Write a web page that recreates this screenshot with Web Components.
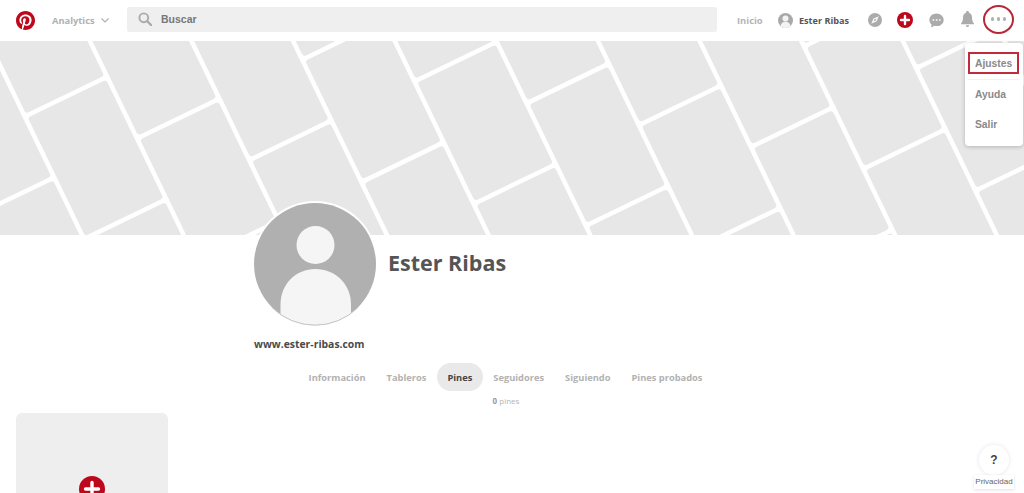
<!DOCTYPE html>
<html lang="es">
<head>
<meta charset="utf-8">
<title>Ester Ribas</title>
<style>
  html, body { margin: 0; height: 493px; overflow: hidden; background: #fff; }
  body { font-family: "Open Sans", "Liberation Sans", sans-serif; }
</style>
</head>
<body>
<pin-page>
  <pin-header slot="header"></pin-header>
  <pin-cover slot="cover"></pin-cover>
  <pin-profile slot="profile" name="Ester Ribas" url="www.ester-ribas.com"></pin-profile>
  <pin-tabs slot="tabs" count="0">
    <pin-tab>Información</pin-tab>
    <pin-tab>Tableros</pin-tab>
    <pin-tab active>Pines</pin-tab>
    <pin-tab>Seguidores</pin-tab>
    <pin-tab>Siguiendo</pin-tab>
    <pin-tab>Pines probados</pin-tab>
  </pin-tabs>
  <pin-add-card slot="grid"></pin-add-card>
  <pin-menu slot="overlay">
    <pin-menu-item marked>Ajustes</pin-menu-item>
    <pin-menu-item divided>Ayuda</pin-menu-item>
    <pin-menu-item>Salir</pin-menu-item>
  </pin-menu>
  <pin-help slot="overlay"></pin-help>
</pin-page>

<script>
const SVG_NS = "http://www.w3.org/2000/svg";

const PLUS_ICON = `
  <svg viewBox="0 0 26 26" width="100%" height="100%" aria-hidden="true">
    <circle cx="13" cy="13" r="13" fill="#bd081c"/>
    <path d="M13 6.500v13M6.500 13h13" stroke="#fff" stroke-width="3.4" stroke-linecap="round"/>
  </svg>`;

class PinElement extends HTMLElement {
  constructor() {
    super();
    this.attachShadow({ mode: "open" });
    this.shadowRoot.innerHTML = this.constructor.markup(this);
  }
}

class PinPage extends PinElement {
  static markup() {
    return `
      <style>
        :host { display: block; position: relative; width: 1024px; height: 493px; overflow: hidden; background: #fff; }
      </style>
      <slot name="header"></slot>
      <slot name="cover"></slot>
      <slot name="profile"></slot>
      <slot name="tabs"></slot>
      <slot name="grid"></slot>
      <slot name="overlay"></slot>`;
  }
}

class PinHeader extends PinElement {
  static markup() {
    return `
      <style>
        :host { display: flex; align-items: center; height: 41px; background: #fff; box-sizing: border-box; padding: 0 0 1px 16px; }
        .logo { width: 19px; height: 19px; flex: none; }
        .analytics { display: flex; align-items: center; gap: 6px; margin-left: 17px; width: 58px; flex: none; font-weight: 700; font-size: 9.300px; color: #b0b0b0; }
        .search { display: flex; align-items: center; gap: 9px; margin-left: 17px; width: 590px; height: 25px; flex: none; box-sizing: border-box; padding: 0 0 1px 11px; margin-bottom: 2px; border-radius: 2px; background: #efefef; }
        .search span { font: 700 10.500px "Liberation Sans", sans-serif; color: #777; }
        .inicio { margin-left: 20px; width: 41px; flex: none; font-weight: 700; font-size: 9.400px; color: #b4b4b4; }
        .user { display: flex; align-items: center; gap: 6px; width: 90px; flex: none; font-weight: 700; font-size: 9.100px; color: #555; white-space: nowrap; }
        .icon { display: block; flex: none; }
        .bell { margin-bottom: 2px; }
        .more { position: relative; display: flex; align-items: center; justify-content: center; width: 31px; height: 29px; flex: none; margin: 0 0 2px 9px; }
        .more::after { content: ""; position: absolute; inset: 0; box-sizing: border-box; border: 2px solid #b5283a; border-radius: 50%; }
        .dot { width: 3.500px; height: 3.500px; margin: 0 1.200px; border-radius: 50%; background: #b0b0b0; }
      </style>
      <svg class="logo" viewBox="0 0 24 24" aria-label="Pinterest">
        <path fill="#bd081c" d="M12 0C5.373 0 0 5.372 0 12c0 5.084 3.163 9.426 7.627 11.174-.105-.949-.2-2.405.042-3.441.218-.937 1.407-5.965 1.407-5.965s-.359-.719-.359-1.782c0-1.668.967-2.914 2.171-2.914 1.023 0 1.518.769 1.518 1.69 0 1.029-.655 2.568-.994 3.995-.283 1.194.599 2.169 1.777 2.169 2.133 0 3.772-2.249 3.772-5.495 0-2.873-2.064-4.882-5.012-4.882-3.414 0-5.418 2.561-5.418 5.207 0 1.031.397 2.138.893 2.738.098.119.112.224.083.345l-.333 1.36c-.053.22-.174.267-.402.161-1.499-.698-2.436-2.889-2.436-4.649 0-3.785 2.75-7.262 7.929-7.262 4.163 0 7.398 2.967 7.398 6.931 0 4.136-2.607 7.464-6.227 7.464-1.216 0-2.359-.631-2.75-1.378l-.748 2.853c-.271 1.043-1.002 2.35-1.492 3.146C9.57 23.812 10.763 24 12 24c6.627 0 12-5.373 12-12 0-6.628-5.373-12-12-12z"/>
      </svg>
      <div class="analytics">
        <span>Analytics</span>
        <svg class="icon" width="8" height="5" viewBox="0 0 8 5"><path d="M.5.500 4 4 7.500.500" fill="none" stroke="#b0b0b0" stroke-width="1.100"/></svg>
      </div>
      <div class="search">
        <svg class="icon" width="14" height="14" viewBox="0 0 14 14"><circle cx="5.800" cy="5.800" r="4.400" fill="none" stroke="#aaa" stroke-width="1.900"/><path d="M9 9l4 4" stroke="#aaa" stroke-width="2.400" stroke-linecap="round"/></svg>
        <span>Buscar</span>
      </div>
      <span class="inicio">Inicio</span>
      <div class="user">
        <svg class="icon" width="15" height="15" viewBox="0 0 15 15">
          <defs><clipPath id="u"><circle cx="7.500" cy="7.500" r="7.500"/></clipPath></defs>
          <circle cx="7.500" cy="7.500" r="7.500" fill="#a9a9a9"/>
          <g clip-path="url(#u)" fill="#f3f3f3"><circle cx="7.500" cy="5.600" r="3"/><ellipse cx="7.500" cy="13.200" rx="5" ry="4.400"/></g>
        </svg>
        <span>Ester Ribas</span>
      </div>
      <svg class="icon" width="14" height="14" viewBox="0 0 14 14">
        <circle cx="7" cy="7" r="7" fill="#ababab"/>
        <path d="M10.800 3.200 8.600 8.600 3.200 10.800 5.400 5.400z" fill="#f4f4f4"/>
        <circle cx="7" cy="7" r=".9" fill="#ababab"/>
      </svg>
      <svg class="icon" style="margin-left:15px" width="16" height="16" viewBox="0 0 26 26">
        <circle cx="13" cy="13" r="13" fill="#bd081c"/>
        <path d="M13 6.500v13M6.500 13h13" stroke="#fff" stroke-width="3.800" stroke-linecap="round"/>
      </svg>
      <svg class="icon" style="margin-left:16px" width="15" height="15" viewBox="0 0 15 15">
        <path d="M7.600.5C3.500.5.4 3.300.4 6.900c0 1.900.9 3.500 2.200 4.700L2.200 14.600l3.200-1.800c.7.2 1.400.3 2.200.3 4 0 7.100-2.800 7.100-6.200S11.600.5 7.600.5z" fill="#ababab"/>
        <circle cx="4.400" cy="6.900" r="1" fill="#eee"/><circle cx="7.600" cy="6.900" r="1" fill="#eee"/><circle cx="10.800" cy="6.900" r="1" fill="#eee"/>
      </svg>
      <svg class="icon bell" style="margin-left:17px" width="13" height="16" viewBox="0 0 13 16">
        <path d="M6.500 0C5.600 0 5 .7 5 1.500v.3C3 2.400 2 4.200 2 6.400c0 3-.7 4.600-2 6v.8h13v-.8c-1.300-1.400-2-3-2-6C11 4.200 10 2.400 8 1.800v-.3C8 .7 7.400 0 6.500 0z" fill="#ababab"/>
        <path d="M4.800 14.200h3.400C8.100 15.200 7.400 16 6.500 16s-1.600-.8-1.700-1.800z" fill="#ababab"/>
      </svg>
      <div class="more" aria-label="Más">
        <span class="dot"></span><span class="dot"></span><span class="dot"></span>
      </div>`;
  }
}

// banner of tilted half-brick tiles, generated in a rotated frame
class PinCover extends PinElement {
  static markup() {
    return `
      <style>
        :host { display: block; height: 194px; overflow: hidden; background: #fff; }
        svg { display: block; }
        rect { fill: #e7e7e7; }
      </style>
      <svg width="1024" height="194" viewBox="0 0 1024 194"><g id="tiles" transform="translate(66 55.700) rotate(-25.800)"></g></svg>`;
  }

  connectedCallback() {
    const group = this.shadowRoot.getElementById("tiles");
    const colWidth = 91.5;
    const tileLength = 136;
    const gap = 4.5;
    for (let col = -2; col < 14; col++) {
      const shift = col * 68.5;
      for (let row = -8; row < 10; row++) {
        const rect = document.createElementNS(SVG_NS, "rect");
        rect.setAttribute("x", (col - 0.5) * colWidth + gap / 2);
        rect.setAttribute("y", shift + row * tileLength + gap / 2);
        rect.setAttribute("width", colWidth - gap);
        rect.setAttribute("height", tileLength - gap);
        rect.setAttribute("rx", 3);
        group.appendChild(rect);
      }
    }
  }
}

class PinProfile extends PinElement {
  static markup(el) {
    return `
      <style>
        :host { display: block; height: 162px; box-sizing: border-box; padding-left: 252px; margin-top: -34px; position: relative; color: #555; }
        .top { display: flex; align-items: flex-start; }
        .avatar { display: block; width: 126px; height: 126px; flex: none; }
        h1 { margin: 42px 0 0 10px; font-size: 21.500px; line-height: 40px; font-weight: 700; color: #555; }
        .url { margin: 9px 0 0 2px; font-size: 10.400px; line-height: 16px; font-weight: 700; color: #4a4a4a; }
      </style>
      <div class="top">
        <svg class="avatar" viewBox="0 0 126 126" aria-hidden="true">
          <defs><clipPath id="c"><circle cx="63" cy="63" r="61"/></clipPath></defs>
          <circle cx="63" cy="63" r="63" fill="#fff"/>
          <circle cx="63" cy="63" r="61" fill="#b0b0b0"/>
          <g clip-path="url(#c)" fill="#f5f5f5">
            <circle cx="63.500" cy="44" r="19"/>
            <path d="M28.500 130V103.500C28.500 83 44 68 63.500 68S99 83 99 103.500V130z"/>
          </g>
          <path d="M20 106.500a61 61 0 0 0 86 0" fill="none" stroke="#c4c4c4" stroke-width="1"/>
        </svg>
        <h1>${el.getAttribute("name")}</h1>
      </div>
      <div class="url">${el.getAttribute("url")}</div>`;
  }
}

class PinTabs extends PinElement {
  static markup(el) {
    return `
      <style>
        :host { display: block; height: 50px; box-sizing: border-box; padding-right: 13px; }
        .row { display: flex; justify-content: center; height: 28px; }
        .count { margin-top: 4px; padding-left: 1px; text-align: center; font-size: 8px; line-height: 12px; color: #b5b5b5; }
        b { color: #999; }
      </style>
      <div class="row"><slot></slot></div>
      <div class="count"><b>${el.getAttribute("count")}</b> pines</div>`;
  }
}

class PinTab extends PinElement {
  static markup() {
    return `
      <style>
        :host { display: flex; align-items: center; height: 28px; padding: 0 10.500px; border-radius: 14px; font-size: 9.300px; font-weight: 700; color: #b2b2b2; white-space: nowrap; }
        :host([active]) { background: #e9e9e9; color: #444; }
      </style>
      <slot></slot>`;
  }
}

class PinAddCard extends PinElement {
  static markup() {
    return `
      <style>
        :host { display: flex; justify-content: center; width: 152px; height: 200px; box-sizing: border-box; margin-left: 16px; padding-top: 63px; border-radius: 6px; background: #eeeeee; }
        .plus { width: 26px; height: 26px; }
      </style>
      <div class="plus">${PLUS_ICON}</div>`;
  }
}

class PinMenu extends PinElement {
  static markup() {
    return `
      <style>
        :host { display: block; position: absolute; top: 43px; right: 1px; width: 58px; height: 103px; box-sizing: border-box; padding-top: 9px; background: #fff; border-radius: 4px; box-shadow: 0 1px 4px rgba(0,0,0,.22); }
      </style>
      <slot></slot>`;
  }
}

class PinMenuItem extends PinElement {
  static markup() {
    return `
      <style>
        :host { display: flex; align-items: center; box-sizing: border-box; width: 52px; height: 30px; margin-left: 3px; padding-left: 7px; font: 700 10.300px "Liberation Sans", sans-serif; color: #8a8a8a; }
        :host([marked]) { width: 51px; height: 22px; margin-bottom: 5px; padding-left: 5px; border: 2px solid #c22a3c; }
        :host([divided]) { border-top: 1px solid #f1f1f1; }
      </style>
      <slot></slot>`;
  }
}

class PinHelp extends PinElement {
  static markup() {
    return `
      <style>
        :host { display: flex; flex-direction: column; align-items: center; position: absolute; right: 9px; top: 445px; width: 42px; }
        .btn { display: flex; align-items: center; justify-content: center; width: 30px; height: 30px; border-radius: 50%; background: #fff; box-shadow: 0 0 5px rgba(0,0,0,.1); font: 700 12px "Liberation Sans", sans-serif; color: #444; }
        .label { padding: 0 1px; background: #fff; box-shadow: 0 1px 3px rgba(0,0,0,.12); font: 400 8px/14px "Liberation Sans", sans-serif; color: #666; }
      </style>
      <div class="btn">?</div>
      <div class="label">Privacidad</div>`;
  }
}

customElements.define("pin-page", PinPage);
customElements.define("pin-header", PinHeader);
customElements.define("pin-cover", PinCover);
customElements.define("pin-profile", PinProfile);
customElements.define("pin-tabs", PinTabs);
customElements.define("pin-tab", PinTab);
customElements.define("pin-add-card", PinAddCard);
customElements.define("pin-menu", PinMenu);
customElements.define("pin-menu-item", PinMenuItem);
customElements.define("pin-help", PinHelp);
</script>
</body>
</html>
